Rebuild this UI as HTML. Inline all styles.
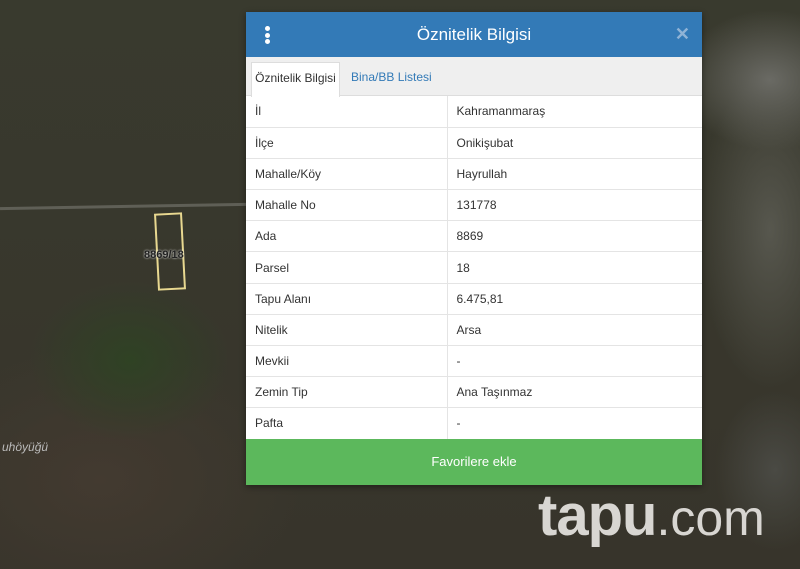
<!DOCTYPE html>
<html><head><meta charset="utf-8"><style>
*{margin:0;padding:0;box-sizing:border-box}
body{width:800px;height:569px;overflow:hidden;position:relative;font-family:"Liberation Sans",Arial,sans-serif;
background:#3a3a2c;}
.map{position:absolute;inset:0;
background:
radial-gradient(ellipse 90px 70px at 770px 80px,#6a6a64 0%,transparent 100%),
radial-gradient(ellipse 70px 160px at 770px 230px,#57574e 0%,transparent 100%),
radial-gradient(ellipse 60px 80px at 775px 470px,#4a4a44 0%,transparent 100%),
radial-gradient(ellipse 100px 80px at 130px 360px,#2f4224 0%,transparent 100%),
radial-gradient(ellipse 200px 140px at 100px 480px,#433a30 0%,transparent 100%),
linear-gradient(180deg,#393a2e,#37342b);}
.road{position:absolute;background:#5f5f56;height:3px}
.dlg{position:absolute;left:246px;top:12px;width:456px;height:473px;background:#fff;box-shadow:0 2px 6px rgba(0,0,0,.4)}
.hd{height:45px;background:#337ab7;color:#fff;font-size:17px;text-align:center;line-height:45px;position:relative}
.dots{position:absolute;left:19px;top:14px;width:5px}
.dots i{display:block;width:5px;height:5px;border-radius:50%;background:#fff;margin-bottom:1.5px}
.x{position:absolute;right:12px;top:0;color:#8fb3d6;font-size:18px;font-weight:bold}
.tabs{height:39px;background:#efefef;border-bottom:1px solid #ddd;position:relative}
.t1{position:absolute;left:5px;top:5px;width:89px;height:35px;background:#fff;border:1px solid #ddd;border-bottom:none;font-size:12px;color:#333;text-align:center;line-height:30px}
.t2{position:absolute;left:105px;top:5px;font-size:12px;color:#337ab7;line-height:30px}
table{border-collapse:collapse;width:456px;font-size:12px;color:#333}
td{height:31.2px;border-bottom:1px solid #e4e4e4;padding-left:9px}
td:first-child{width:201px;border-right:1px solid #e4e4e4}
.btn{position:absolute;left:0;top:427px;width:456px;height:46px;background:#5cb85c;color:#fff;font-size:13px;text-align:center;line-height:46px}
.logo{position:absolute;left:538px;top:482px;color:#d8d6d2;font-size:58px;font-weight:bold;letter-spacing:-1px;white-space:nowrap}
.logo span{font-weight:normal;font-size:50px;letter-spacing:0}
.lbl{position:absolute;color:#ddd;font-size:11px;font-weight:bold}
</style></head><body>
<div class="map"></div>
<div class="road" style="left:0;top:205px;width:246px;transform:rotate(-1deg)"></div>
<div style="position:absolute;left:156px;top:213px;width:28px;height:77px;border:2px solid #e8d890;transform:rotate(-3deg)"></div>
<div class="lbl" style="left:144px;top:249px;color:#222;text-shadow:0 0 2px #fff">8869/18</div>
<div class="lbl" style="left:2px;top:440px;font-weight:normal;font-size:12px;font-style:italic;color:#bbb">uhöyüğü</div>
<div class="dlg">
<div class="hd"><div class="dots"><i></i><i></i><i></i></div>Öznitelik Bilgisi<span class="x">✕</span></div>
<div class="tabs"><div class="t1">Öznitelik Bilgisi</div><div class="t2">Bina/BB Listesi</div></div>
<table>
<tr><td>İl</td><td>Kahramanmaraş</td></tr>
<tr><td>İlçe</td><td>Onikişubat</td></tr>
<tr><td>Mahalle/Köy</td><td>Hayrullah</td></tr>
<tr><td>Mahalle No</td><td>131778</td></tr>
<tr><td>Ada</td><td>8869</td></tr>
<tr><td>Parsel</td><td>18</td></tr>
<tr><td>Tapu Alanı</td><td>6.475,81</td></tr>
<tr><td>Nitelik</td><td>Arsa</td></tr>
<tr><td>Mevkii</td><td>-</td></tr>
<tr><td>Zemin Tip</td><td>Ana Taşınmaz</td></tr>
<tr><td>Pafta</td><td>-</td></tr>
</table>
<div class="btn">Favorilere ekle</div>
</div>
<div class="logo">tapu<span>.com</span></div>
</body></html>
